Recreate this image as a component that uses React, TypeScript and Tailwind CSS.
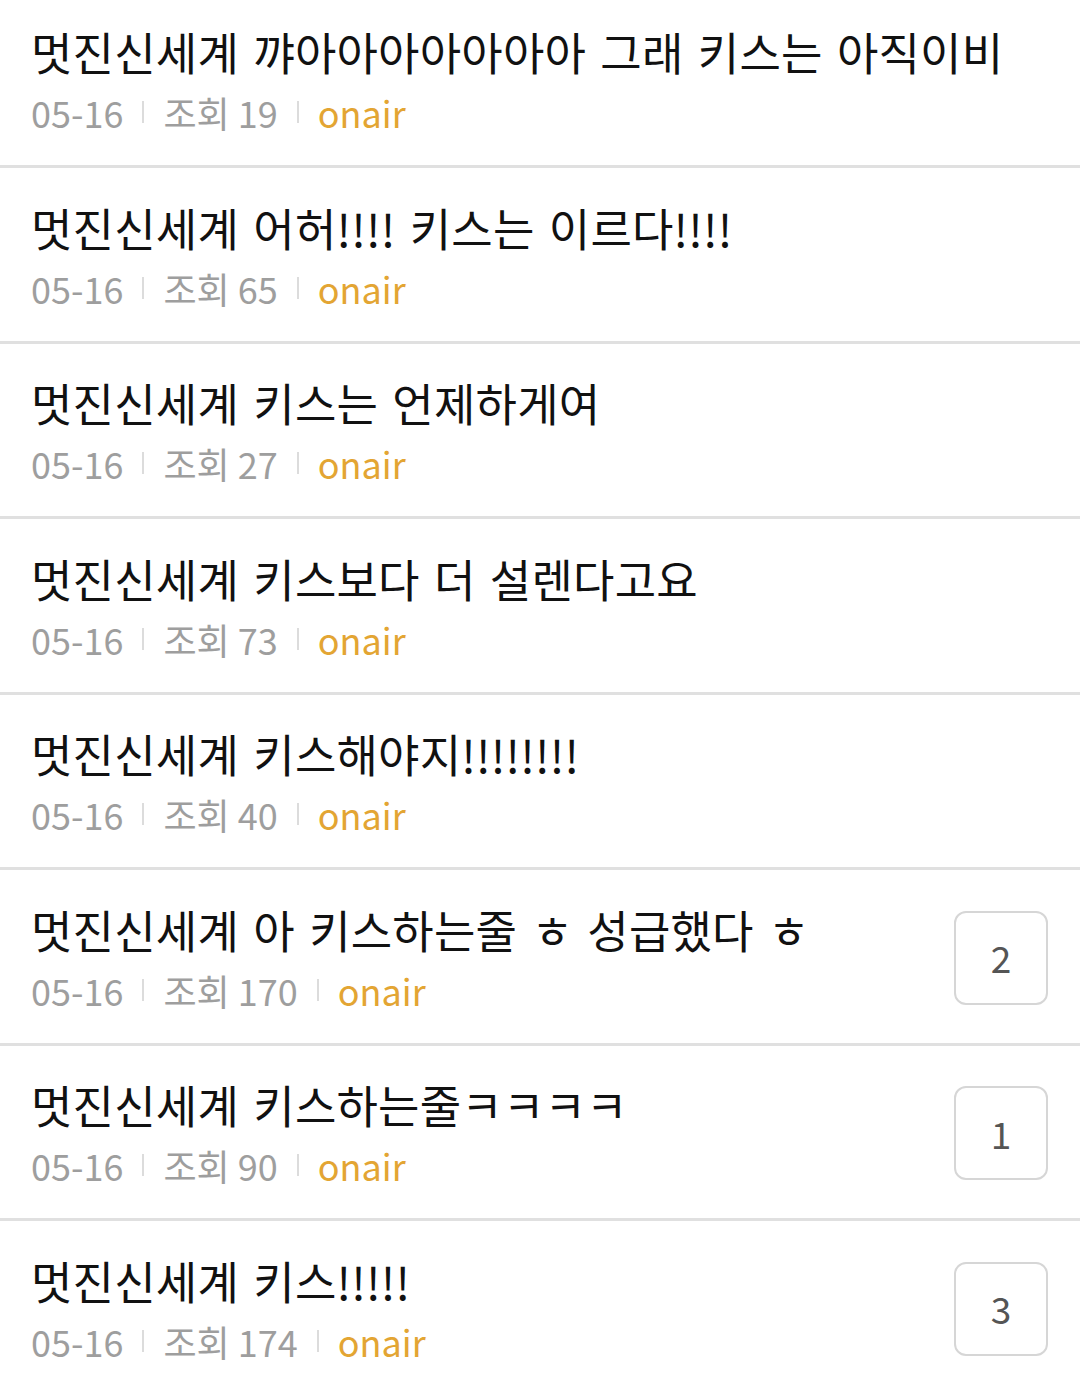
const posts = [
  { title: "멋진신세계 꺄아아아아아아아 그래 키스는 아직이비", views: 19 },
  { title: "멋진신세계 어허!!!! 키스는 이르다!!!!", views: 65 },
  { title: "멋진신세계 키스는 언제하게여", views: 27 },
  { title: "멋진신세계 키스보다 더 설렌다고요", views: 73 },
  { title: "멋진신세계 키스해야지!!!!!!!!", views: 40 },
  { title: "멋진신세계 아 키스하는줄 ㅎ 성급했다 ㅎ", views: 170, comments: 2 },
  { title: "멋진신세계 키스하는줄ㅋㅋㅋㅋ", views: 90, comments: 1 },
  { title: "멋진신세계 키스!!!!!", views: 174, comments: 3 },
];

function Divider() {
  return <span className="mx-[19px] h-[22px] w-[2px] bg-[#dcdcdc]" />;
}

export default function App() {
  return (
    <div
      className="min-h-screen overflow-hidden bg-white"
      style={{ fontFamily: '"Noto Sans CJK KR", "Noto Sans", sans-serif' }}
    >
      <ul className="-mt-[7.5px]">
        {posts.map((p, i) => (
          <li
            key={i}
            className="flex h-[175.5px] items-center border-b-[3px] border-[#e0e0e0] pl-[31px] pr-[32px]"
          >
            <div className="flex min-w-0 flex-1 flex-col pt-[3px]">
              <div className="text-[45px] leading-[58px] tracking-[0.2px] [word-spacing:4px] text-[#111] whitespace-nowrap">
                {p.title}
              </div>
              <div className="mt-[6px] flex items-center text-[36px] leading-[50px] text-[#9e9e9e]">
                <span>05-16</span>
                <Divider />
                <span>조회 {p.views}</span>
                <Divider />
                <span className="text-[#e3a533]">onair</span>
              </div>
            </div>
            {p.comments !== undefined && (
              <div className="mt-[3px] flex h-[94px] w-[94px] shrink-0 items-center justify-center rounded-[12px] border-2 border-[#d6d6d6] text-[37px] text-[#555]">
                {p.comments}
              </div>
            )}
          </li>
        ))}
      </ul>
    </div>
  );
}
